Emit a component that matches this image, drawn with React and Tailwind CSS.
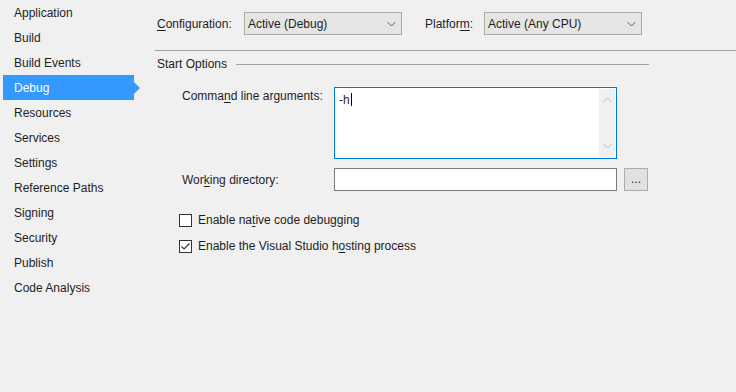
const navItems = [
  'Application',
  'Build',
  'Build Events',
  'Debug',
  'Resources',
  'Services',
  'Settings',
  'Reference Paths',
  'Signing',
  'Security',
  'Publish',
  'Code Analysis',
];

function Chevron({ up = false, className = '' }) {
  return (
    <svg width="9" height="6" viewBox="0 0 9 6" className={className}>
      <path
        d={up ? 'M0.5 5 L4.5 1 L8.5 5' : 'M0.5 1 L4.5 5 L8.5 1'}
        fill="none"
        stroke="currentColor"
        strokeWidth="1"
      />
    </svg>
  );
}

function Combo({ value }) {
  return (
    <div className="flex h-[23px] w-[158px] items-center justify-between border border-[#acacac] bg-[#e5e5e5] pl-[3px] pr-[5px]">
      <span>{value}</span>
      <Chevron className="text-[#606060]" />
    </div>
  );
}

function Check({ checked, children }) {
  return (
    <div className="flex h-[16px] items-center pl-[24px]">
      <div className="flex h-[13px] w-[13px] items-center justify-center border border-[#333] bg-white">
        {checked && (
          <svg width="11" height="11" viewBox="0 0 11 11">
            <path d="M1.5 5.5 L4 8 L9.5 2.5" fill="none" stroke="#333" strokeWidth="1.2" />
          </svg>
        )}
      </div>
      <span className="ml-[6px]">{children}</span>
    </div>
  );
}

export default function App() {
  return (
    <div
      className="flex h-[392px] w-[736px] bg-[#f0f0f0] text-[12px] leading-[16px] text-[#1e1e1e]"
      style={{ fontFamily: '"Liberation Sans", Arial, sans-serif' }}
    >
      {/* left nav */}
      <div className="w-[155px] shrink-0 pl-[3px]">
        {navItems.map((item) =>
          item === 'Debug' ? (
            <div key={item} className="relative flex h-[25px] w-[131px] items-center bg-[#3399ff] pl-[11px] text-white">
              {item}
              <div className="absolute left-full top-[7px] h-0 w-0 border-y-[6px] border-l-[6px] border-y-transparent border-l-[#3399ff]" />
            </div>
          ) : (
            <div key={item} className="flex h-[25px] w-[131px] items-center pl-[11px]">
              {item}
            </div>
          )
        )}
      </div>

      {/* main panel */}
      <div className="flex flex-1 flex-col">
        <div className="mt-[12px] flex items-center pl-[2px]">
          <span className="w-[87px]">
            <u className="underline-offset-2">C</u>onfiguration:
          </span>
          <Combo value="Active (Debug)" />
          <span className="ml-[23px] w-[59px]">
            Platfor<u className="underline-offset-2">m</u>:
          </span>
          <Combo value="Active (Any CPU)" />
        </div>

        <div className="mt-[15px] h-px bg-[#a0a0a0]" />

        <div className="mt-[5px] flex items-center pl-[2px]">
          <span>Start Options</span>
          <div className="ml-[9px] h-px w-[413px] bg-[#a0a0a0]" />
        </div>

        <div className="mt-[15px] flex pl-[27px]">
          <span className="w-[152px] pt-[1px]">
            Comma<u className="underline-offset-2">n</u>d line arguments:
          </span>
          <div className="flex h-[72px] w-[283px] border border-[#0078d7] bg-white">
            <div className="flex-1 pl-[4px] pt-[3px]">
              -h<span className="ml-px inline-block h-[13px] w-px translate-y-[2px] bg-black" />
            </div>
            <div className="my-px mr-px flex w-[16px] flex-col items-center justify-between bg-[#f0f0f0] py-[8px] text-[#c0c0c0]">
              <Chevron up />
              <Chevron />
            </div>
          </div>
        </div>

        <div className="mt-[9px] flex items-center pl-[27px]">
          <span className="w-[152px]">
            Wor<u className="underline-offset-2">k</u>ing directory:
          </span>
          <div className="h-[23px] w-[283px] border border-[#7a7a7a] bg-white" />
          <div className="ml-[7px] flex h-[23px] w-[24px] items-center justify-center border border-[#adadad] bg-[#e1e1e1] pb-[2px]">
            ...
          </div>
        </div>

        <div className="mt-[21px]">
          <Check>
            Enable na<u className="underline-offset-2">t</u>ive code debugging
          </Check>
        </div>
        <div className="mt-[10px]">
          <Check checked>
            Enable the Visual Studio h<u className="underline-offset-2">o</u>sting process
          </Check>
        </div>
      </div>
    </div>
  );
}
